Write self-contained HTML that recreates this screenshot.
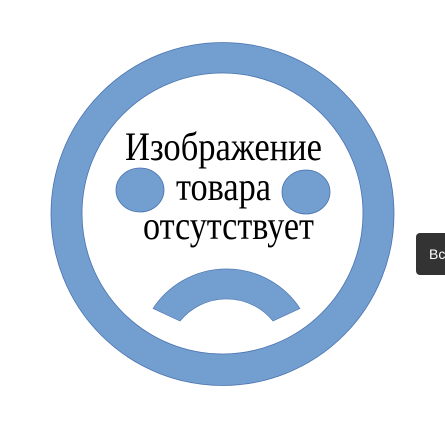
<!DOCTYPE html>
<html><head><meta charset="utf-8"><style>
html,body{margin:0;padding:0;background:#fff;width:445px;height:427px;overflow:hidden;position:relative}
.btn{position:absolute;left:416px;top:233px;width:40px;height:42px;background:#333;border-radius:4px;color:#fff;font:14px "Liberation Sans",sans-serif;line-height:42px;padding-left:13px;box-sizing:border-box}
</style></head><body>
<svg width="445" height="427" style="position:absolute;left:0;top:0">
<path fill-rule="evenodd" fill="#729fcf" stroke="#4a72b0" stroke-width="0.8" d="M51,214a171.5,171.5 0 1,0 343,0a171.5,171.5 0 1,0 -343,0Z M82,213.5a140.5,140.5 0 1,0 281,0a140.5,140.5 0 1,0 -281,0Z"/>
<ellipse cx="140" cy="190" rx="24" ry="22" fill="#729fcf" stroke="#4a72b0" stroke-width="0.8"/>
<ellipse cx="306" cy="192" rx="24" ry="22" fill="#729fcf" stroke="#4a72b0" stroke-width="0.8"/>
<path fill="#729fcf" stroke="#4a72b0" stroke-width="0.6" d="M153,308.5 A88,88 0 0,1 300,308.5 L273,321 A60,60 0 0,0 180,321 Z"/>
<g font-family="'Liberation Serif','DejaVu Serif',serif" font-size="40" fill="#000">
<text x="125" y="160" textLength="197" lengthAdjust="spacingAndGlyphs">Изображение</text>
<text x="176" y="200" textLength="95" lengthAdjust="spacingAndGlyphs">товара</text>
<text x="143" y="239" textLength="171" lengthAdjust="spacingAndGlyphs">отсутствует</text>
</g>
</svg>
<div class="btn">Вс</div>
</body></html>
